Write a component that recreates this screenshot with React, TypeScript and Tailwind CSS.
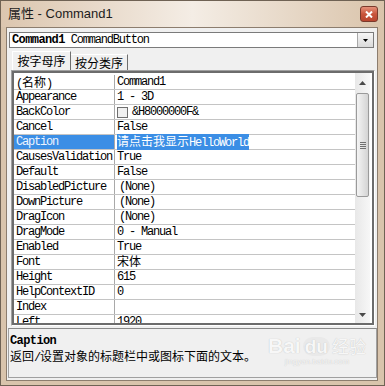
import React from 'react';

// 属性窗口 (VB6 Properties window, Win7 basic theme)

type Row = { name: string; value: string; kind?: 'color' | 'sel' | 'pic' };

const rows: Row[] = [
  { name: '(名称)', value: 'Command1' },
  { name: 'Appearance', value: '1 - 3D' },
  { name: 'BackColor', value: '&H8000000F&', kind: 'color' },
  { name: 'Cancel', value: 'False' },
  { name: 'Caption', value: '请点击我显示HelloWorld', kind: 'sel' },
  { name: 'CausesValidation', value: 'True' },
  { name: 'Default', value: 'False' },
  { name: 'DisabledPicture', value: '(None)', kind: 'pic' },
  { name: 'DownPicture', value: '(None)', kind: 'pic' },
  { name: 'DragIcon', value: '(None)', kind: 'pic' },
  { name: 'DragMode', value: '0 - Manual' },
  { name: 'Enabled', value: 'True' },
  { name: 'Font', value: '宋体' },
  { name: 'Height', value: '615' },
  { name: 'HelpContextID', value: '0' },
  { name: 'Index', value: '' },
  { name: 'Left', value: '1920' },
];

// 中文用黑体, 其余按宋体的半角宽度 (6px) 排
const Txt = ({ s }: { s: string }) => (
  <>
    {s
      .split(/([\u3000-\u9fff\uff00-\uffef]+)/)
      .filter(Boolean)
      .map((p, i) =>
        /[\u3000-\u9fff\uff00-\uffef]/.test(p) ? (
          <span key={i} className="font-['Noto_Sans_CJK_SC',sans-serif] tracking-normal leading-[14px]">
            {p}
          </span>
        ) : (
          <span key={i} className="tracking-[-1.2px] whitespace-pre">
            {p}
          </span>
        )
      )}
  </>
);

const Arrow = ({ up }: { up?: boolean }) => (
  <svg width="7" height="4" viewBox="0 0 7 4">
    <path d={up ? 'M0 4 L3.5 0 L7 4 Z' : 'M0 0 L3.5 4 L7 0 Z'} fill="#4a4a4a" />
  </svg>
);

export default function App() {
  const mono = "font-['Liberation_Mono','Noto_Sans_CJK_SC',monospace]";
  return (
    <div className="w-[385px] h-[386px] flex flex-col bg-[#d9c4ac] border border-[#6f6254] overflow-hidden">
      {/* 标题栏 */}
      <div className="h-[26px] shrink-0 flex items-center justify-between pl-[7px] pr-[6px] bg-gradient-to-r from-[#dcc6af] via-[#f4ede5] to-[#dac4ab]">
        <span className="text-[13px] text-[#1c1c1c] font-['Liberation_Sans','Noto_Sans_CJK_SC',sans-serif]">
          属性 - Command1
        </span>
        <div className="w-[18px] h-[16px] rounded-[3px] border border-[#7a3a2c] bg-gradient-to-b from-[#e5907a] via-[#c8553c] to-[#b9462f] flex items-center justify-center">
          <svg width="8" height="7" viewBox="0 0 8 7">
            <path d="M1 0.5 L7 6.5 M7 0.5 L1 6.5" stroke="#fff" strokeWidth="2" />
          </svg>
        </div>
      </div>

      {/* 客户区 */}
      <div className="flex-1 ml-[5px] mr-[6px] mb-[4px] border border-[#8c7d6e] bg-[#f0f0f0] flex flex-col">
        {/* 对象下拉框 */}
        <div className="mt-[4px] ml-[2px] mr-[3px] h-[16px] flex border border-[#7b7b7b] bg-white">
          <div className={`flex-1 pl-[2px] text-[12px] leading-[14px] text-black ${mono}`}>
            <span className="font-bold tracking-[-0.6px]">Command1</span>
            <span className="tracking-[-1.2px] whitespace-pre"> CommandButton</span>
          </div>
          <div className="w-[16px] border-l border-[#a8a8a8] bg-gradient-to-b from-[#f6f6f6] to-[#dadada] flex items-center justify-center">
            <svg width="5" height="3" viewBox="0 0 5 3">
              <path d="M0 0 L2.5 3 L5 0 Z" fill="#000" />
            </svg>
          </div>
        </div>

        {/* 选项卡 */}
        <div className="mt-[3px] ml-[5px] h-[19px] flex items-end text-[12px] text-black font-['Noto_Sans_CJK_SC',sans-serif]">
          <div className="h-[19px] w-[59px] border-t border-l border-white border-r border-r-[#6f6f6f] flex items-center justify-center leading-none">
            按字母序
          </div>
          <div className="h-[16px] w-[57px] border-t border-white border-r border-r-[#6f6f6f] flex items-center justify-center leading-none">
            按分类序
          </div>
        </div>

        {/* 属性表格 */}
        <div className="ml-[4px] mr-[2px] h-[256px] border border-[#a0a0a0] border-b-white border-r-white">
          <div className="h-full border-2 border-[#6c6c6c] bg-white flex overflow-hidden">
            <div className={`flex-1 pt-[2px] overflow-hidden text-[12px] leading-[14px] text-black ${mono}`}>
              {rows.map((r) => (
                <div key={r.name} className="h-[15px] flex border-b border-[#c4c4c4]">
                  <div
                    className={`w-[101px] shrink-0 pl-[2px] border-r border-[#a9a9a9] ${
                      r.kind === 'sel' ? 'bg-[#3b8ee5] text-[#eef5ff]' : ''
                    }`}
                  >
                    <Txt s={r.name} />
                  </div>
                  <div className="flex-1 pl-[2px] flex items-center">
                    {r.kind === 'color' && (
                      <span className="w-[11px] h-[11px] border border-[#6f6f6f] bg-[#f0f0f0] mr-[4px] shrink-0" />
                    )}
                    {r.kind === 'sel' ? (
                      <span className="bg-[#3b8ee5] text-white">
                        <Txt s={r.value} />
                      </span>
                    ) : (
                      <span className={r.kind === 'pic' ? 'pl-[2px]' : ''}>
                        <Txt s={r.value} />
                      </span>
                    )}
                  </div>
                </div>
              ))}
            </div>
            {/* 滚动条 */}
            <div className="w-[15px] mr-[2px] shrink-0 flex flex-col bg-gradient-to-r from-[#e8e8e8] to-[#f7f7f7]">
              <div className="h-[20px] flex items-center justify-center">
                <Arrow up />
              </div>
              <div className="h-[104px] mx-[1px] rounded-[2px] border border-[#9a9a9a] bg-gradient-to-r from-[#f4f4f4] to-[#d4d4d4] flex flex-col items-center justify-center gap-[1px]">
                <div className="w-[6px] h-[1px] bg-[#707070]" />
                <div className="w-[6px] h-[1px] bg-[#707070]" />
                <div className="w-[6px] h-[1px] bg-[#707070]" />
                <div className="w-[6px] h-[1px] bg-[#707070]" />
              </div>
              <div className="flex-1" />
              <div className="h-[17px] flex items-center justify-center">
                <Arrow />
              </div>
            </div>
          </div>
        </div>

        {/* 说明区 */}
        <div className="relative mt-[2px] ml-[1px] h-[50px] border border-[#a0a0a0] border-t-[#8a8a8a] pl-[1px] pt-[5px] text-[12px] leading-[14px] text-black">
          <div className={`font-bold tracking-[-0.6px] ${mono}`}>Caption</div>
          <div className={`mt-[1px] ${mono}`}>
            <Txt s="返回/设置对象的标题栏中或图标下面的文本。" />
          </div>
          {/* 百度经验水印 */}
          <div className="absolute left-[259px] top-[6px] flex flex-col items-center text-[#f7f7f7] [text-shadow:0_0_1px_#b9b9b9] font-['Liberation_Sans','Noto_Sans_CJK_SC',sans-serif]">
            <div className="flex items-end leading-none">
              <span className="text-[21px] font-bold">Bai</span>
              <span className="text-[19px] font-bold mx-[2px] rounded-full bg-[#e9e9e9] px-[2px]">du</span>
              <span className="text-[17px]">经验</span>
            </div>
            <span className="text-[8px] leading-[10px] mt-[1px]">jingyan.baidu.com</span>
          </div>
        </div>
      </div>
    </div>
  );
}
